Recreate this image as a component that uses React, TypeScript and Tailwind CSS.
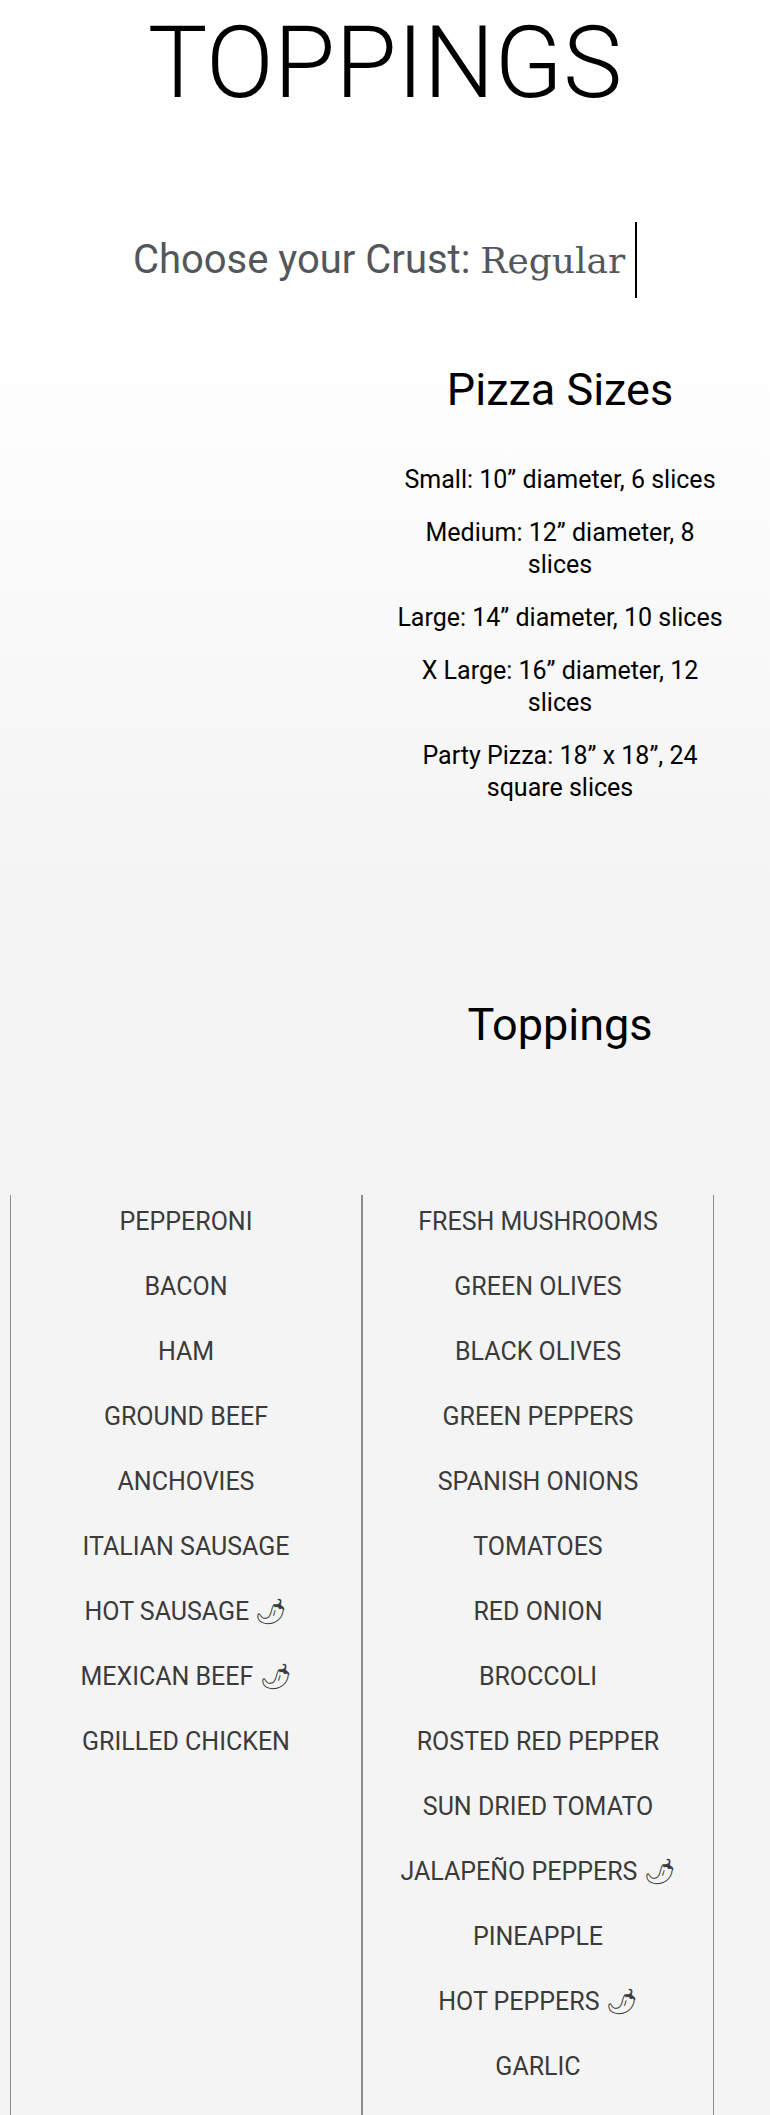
const sizes = [
  'Small: 10” diameter, 6 slices',
  'Medium: 12” diameter, 8 slices',
  'Large: 14” diameter, 10 slices',
  'X Large: 16” diameter, 12 slices',
  'Party Pizza: 18” x 18”, 24 square slices',
];

const meats = [
  'PEPPERONI',
  'BACON',
  'HAM',
  'GROUND BEEF',
  'ANCHOVIES',
  'ITALIAN SAUSAGE',
  'HOT SAUSAGE \u{1F336}',
  'MEXICAN BEEF \u{1F336}',
  'GRILLED CHICKEN',
];

const veggies = [
  'FRESH MUSHROOMS',
  'GREEN OLIVES',
  'BLACK OLIVES',
  'GREEN PEPPERS',
  'SPANISH ONIONS',
  'TOMATOES',
  'RED ONION',
  'BROCCOLI',
  'ROSTED RED PEPPER',
  'SUN DRIED TOMATO',
  'JALAPEÑO PEPPERS \u{1F336}',
  'PINEAPPLE',
  'HOT PEPPERS \u{1F336}',
  'GARLIC',
];

const ToppingList = ({ items }: { items: string[] }) => (
  <ul className="w-[352px] border-x border-[#8c8c8c] pt-[7px] pb-[60px] flex flex-col gap-[26px]">
    {items.map((item) => (
      <li key={item} className="text-center text-[25px] leading-[39px] text-[#3b3b3b]">
        {item}
      </li>
    ))}
  </ul>
);

export default function App() {
  return (
    <div className="font-['Roboto','Liberation_Sans',sans-serif] bg-[#f4f4f4]">
      {/* header */}
      <header className="bg-white text-center h-[330px]">
        <h1 className="text-[100px] font-light leading-[1.25] text-black">TOPPINGS</h1>
        <div className="mt-[97px]">
          <span className="inline-block text-[40px] leading-[75px] text-[#53575c] pr-[10px] border-r-2 border-black">
            Choose your Crust:{' '}
            <span className="font-['DejaVu_Serif','Liberation_Serif',serif] text-[36px]">Regular</span>
          </span>
        </div>
      </header>

      {/* sizes */}
      <section className="bg-gradient-to-b from-white to-[#f4f4f4] h-[550px] pt-[33px] flex">
        <div className="w-[350px]" />
        <div className="flex-1 flex flex-col items-center">
          <h2 className="text-[45px] leading-[53px] text-black">Pizza Sizes</h2>
          <div className="w-[330px] mt-[48px] flex flex-col gap-[21px]">
            {sizes.map((s) => (
              <p key={s} className="text-center text-[25px] leading-[32px] text-black">
                {s}
              </p>
            ))}
          </div>
        </div>
      </section>

      {/* toppings */}
      <section className="pt-[118px]">
        <div className="flex">
          <div className="w-[350px]" />
          <h2 className="flex-1 text-center text-[45px] leading-[53px] text-black">Toppings</h2>
        </div>
        <div className="mt-[144px] pl-[10px] flex">
          <ToppingList items={meats} />
          <ToppingList items={veggies} />
        </div>
      </section>
    </div>
  );
}
